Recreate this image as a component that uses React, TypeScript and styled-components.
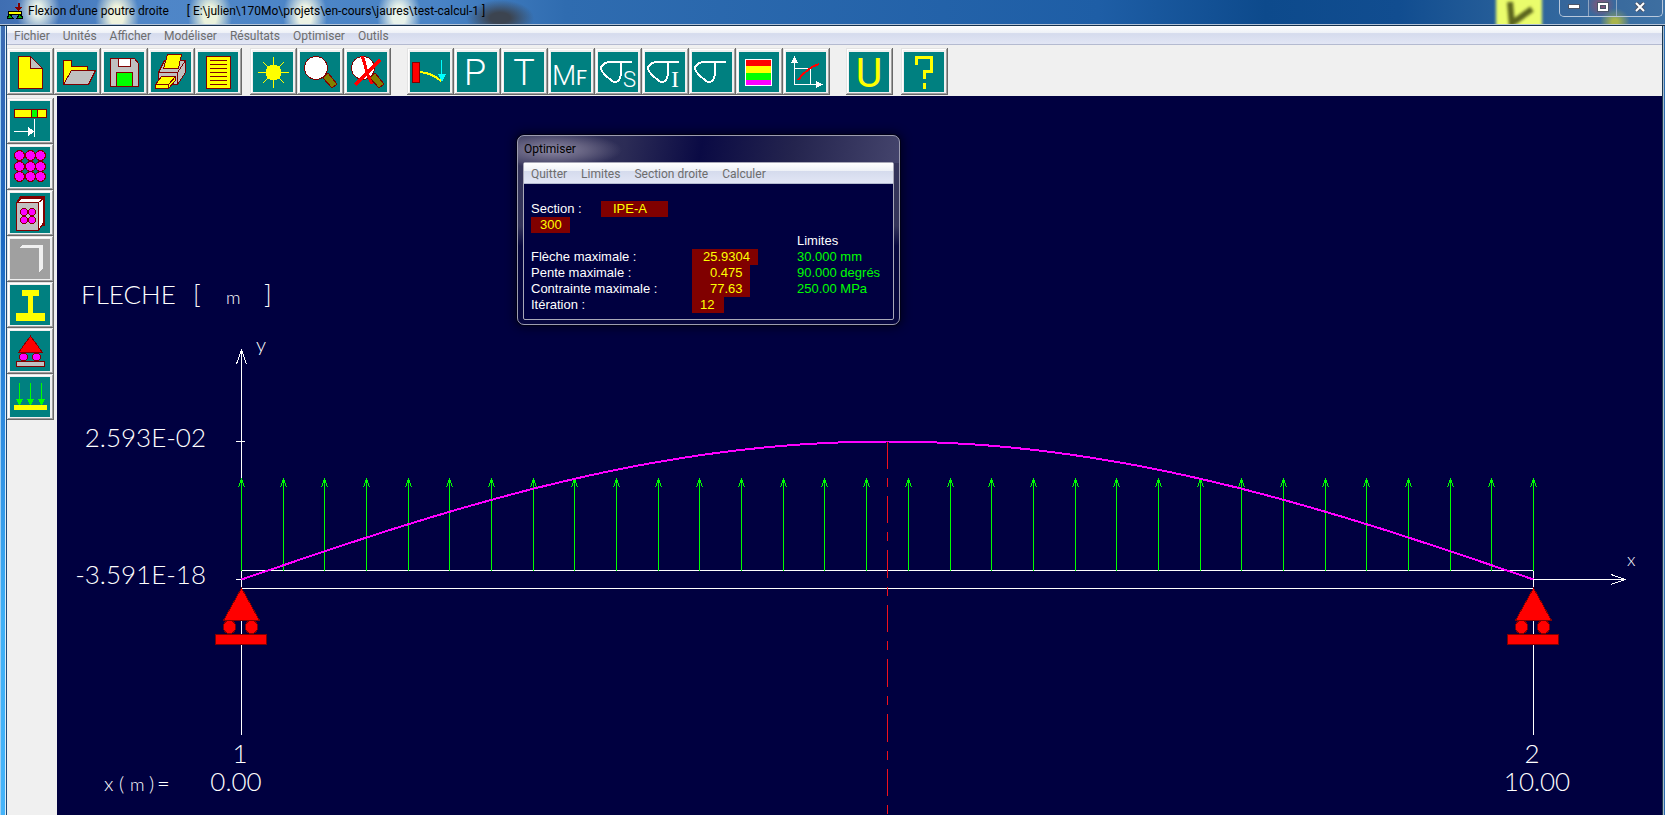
import React from "react";
import styled, { createGlobalStyle } from "styled-components";

const NAVY = "#000040";
const MAROON = "#800000";
const UI_FONT = 'Roboto, "Open Sans", sans-serif';

const GlobalStyle = createGlobalStyle`
  * { box-sizing: border-box; }
  body { margin: 0; background: ${NAVY}; font-family: ${UI_FONT}; font-size: 12px; }
  button { font: inherit; color: inherit; }
`;

/* ---------- window frame ---------- */

const Window = styled.div`
  display: flex;
  flex-direction: column;
  min-height: 100vh;
  padding: 0 3px 0 7px;
  background:
    linear-gradient(90deg, #9fd0f4 0 1px, transparent 1px 5px, #d8ecfa 5px 6px, #1c4a78 6px 7px, transparent 7px),
    linear-gradient(270deg, #2a6cae 0 1px, #a9bccf 1px 2px, #1c3a50 2px 3px, transparent 3px),
    linear-gradient(180deg, #3f6fb0 0, #3668b4 60px, #1a67c0 240px, #2a86dc 400px, #3fb0f6 620px, #45b4fa 100%);
`;

const TitleBar = styled.header`
  display: flex;
  align-items: flex-start;
  justify-content: space-between;
  height: 26px;
  margin: 0 -3px 0 -7px;
  padding: 0 2px 0 7px;
  border-bottom: 1px solid #14304c;
  box-shadow: inset 0 -1px 0 #b4c4d8;
  background:
    radial-gradient(ellipse 22px 30px at 38px 10px, #e6f0e8 20%, transparent 100%),
    radial-gradient(ellipse 22px 34px at 117px 16px, #eef2dc 30%, transparent 100%),
    radial-gradient(ellipse 22px 34px at 210px 16px, #eaf2dc 30%, transparent 100%),
    radial-gradient(ellipse 22px 34px at 305px 16px, #ecf2e4 30%, transparent 100%),
    radial-gradient(ellipse 22px 34px at 399px 16px, #e8f2ea 30%, transparent 100%),
    radial-gradient(ellipse 34px 18px at 500px 18px, #3c4450 30%, transparent 100%),
    radial-gradient(ellipse 14px 12px at calc(100% - 64px) 5px, #b04c68 10%, transparent 100%),
    radial-gradient(ellipse 15px 14px at calc(100% - 50px) 22px, #a8b44c 20%, transparent 100%),
    linear-gradient(90deg, #3f6eb2 0, #4f86c8 8%, #4a84c6 26%, #2f6cb0 34%, #1e5ea6 66%, #0d4a8c 76%, #114d90 84%, #33689e 94%, #3f74a8 100%);
`;

const TitleGroup = styled.div`
  display: flex;
  align-items: center;
  gap: 5px;
  height: 22px;
`;

const TitleText = styled.h1`
  margin: 0;
  font-size: 12px;
  font-weight: 400;
  line-height: 20px;
  color: #000;
  white-space: pre;
`;

const TitleRight = styled.div`
  display: flex;
  align-items: flex-start;
  gap: 12px;
`;

const CaptionButtons = styled.div`
  display: flex;
  height: 17px;
  border: 1px solid #b8c8dc;
  border-top: 0;
  border-radius: 0 0 5px 5px;
  overflow: hidden;
`;

const CaptionButton = styled.button<{ $wide?: boolean }>`
  display: grid;
  place-items: center;
  width: ${(p) => (p.$wide ? 46 : 28)}px;
  height: 16px;
  padding: 0 0 3px;
  border: 0;
  border-left: 1px solid #8ea6c2;
  background: rgba(60, 100, 150, 0.35);
  &:first-child { border-left: 0; }
`;

const MenuBar = styled.nav<{ $inset?: boolean }>`
  display: flex;
  gap: ${(p) => (p.$inset ? 14 : 13)}px;
  height: ${(p) => (p.$inset ? 21 : 19)}px;
  padding: 1px 7px 0;
  border-bottom: 1px solid #b4bad0;
  background: linear-gradient(180deg, #fff 0, #eef1f7 38%, #d5dbed 42%, #e2e6f5 100%);
`;

const MenuItem = styled.button`
  padding: 0;
  border: 0;
  background: none;
  font-size: 12px;
  line-height: 18px;
  color: #6d6d6d;
`;

/* ---------- tool buttons ---------- */

const Toolbar = styled.div`
  display: flex;
  gap: 16px;
  height: 51px;
  padding-top: 3px;
  background: #f0f0f0;
`;

const ToolGroup = styled.div`
  display: flex;
`;

const ToolCluster = styled.div`
  display: flex;
  gap: 8px;
`;

const ToolButton = styled.button<{ $short?: boolean; $disabled?: boolean }>`
  flex: none;
  width: 47px;
  height: ${(p) => (p.$short ? 46 : 47)}px;
  padding: 3px 4px 3px 3px;
  border: 0;
  background: #f0f0f0;
  box-shadow: inset -1px -1px 0 #696969, inset 1px 1px 0 #e3e3e3, inset -2px -2px 0 #a0a0a0, inset 2px 2px 0 #fff;
  svg {
    display: block;
    width: 40px;
    height: 40px;
    overflow: visible;
    background: ${(p) => (p.$disabled ? "#a0a0a0" : "#008080")};
  }
`;

const Main = styled.main`
  display: flex;
  flex: 1;
`;

const Sidebar = styled.aside`
  display: flex;
  flex-direction: column;
  flex: none;
  width: 50px;
  padding-top: 2px;
  background: #f0f0f0;
`;

const Plot = styled.section`
  position: relative;
  flex: 1;
  min-width: 0;
  background: ${NAVY};
`;

const Diagram = styled.svg`
  display: block;
  width: 100%;
  height: auto;
  font-family: Lato, "Liberation Sans", sans-serif;
  font-weight: 300;
  font-size: 26px;
  fill: #fff;
`;

/* ---------- dialog ---------- */

const Dialog = styled.section`
  position: absolute;
  left: 460px;
  top: 39px;
  width: 383px;
  padding: 0 5px 4px;
  border: 1px solid #9c9cb0;
  border-radius: 7px;
  box-shadow: 0 0 0 1px #000018, 0 0 8px 3px rgba(0, 0, 20, 0.7);
  background:
    radial-gradient(ellipse 70px 18px at 34px 14px, #8c88a4 0, #63607f 50%, transparent 100%),
    linear-gradient(100deg, #3a3a5e 0, #2c2c56 28%, #0a0a44 48%, #24244e 72%, #44446c 100%) top / 100% 27px no-repeat,
    linear-gradient(180deg, #34345a 0, #34345a 90px, #06063e 110px);
`;

const DialogTitle = styled.h2`
  margin: 0;
  padding: 2px 0 0 1px;
  height: 26px;
  font-size: 12px;
  font-weight: 400;
  line-height: 22px;
  color: #000;
`;

const DialogFrame = styled.div`
  border: 1px solid #a8a8b8;
  border-radius: 2px;
  background: ${NAVY};
`;

const DialogBody = styled.div`
  padding: 17px 8px 6px 7px;
  font-family: "Liberation Sans", Arial, sans-serif;
  font-size: 13px;
  line-height: 16px;
  color: #fff;
`;

const SectionRow = styled.div`
  display: flex;
`;

const SectionLabel = styled.span`
  width: 70px;
`;

const Value = styled.output<{ $width: number; $start: number }>`
  display: block;
  width: ${(p) => p.$width}px;
  padding-left: ${(p) => p.$start}px;
  background: ${MAROON};
  color: #ff0;
`;

const Results = styled.table`
  width: 100%;
  table-layout: fixed;
  border-collapse: collapse;
  th, td { padding: 0; font-weight: 400; text-align: left; white-space: nowrap; }
`;

const LabelCol = styled.col`width: 161px;`;
const ValueCol = styled.col`width: 105px;`;

const Limit = styled.td`
  color: #0f0;
`;

/* ---------- icons (40 × 40) ---------- */

const Icon = ({ children, smooth }: { children: React.ReactNode; smooth?: boolean }) => (
  <svg viewBox="0 0 40 40" shapeRendering={smooth ? "auto" : "crispEdges"} aria-hidden="true">
    {children}
  </svg>
);

const IconText = styled.text<{ $size: number; $weight?: number; $serif?: boolean }>`
  font-family: ${(p) => (p.$serif ? '"Liberation Serif", serif' : "Roboto, sans-serif")};
  font-size: ${(p) => p.$size}px;
  font-weight: ${(p) => p.$weight ?? 300};
`;

const outline = { stroke: MAROON, strokeWidth: 1 };

const Sigma = () => (
  <path d="M34 10H12Q3 11 3 17Q4 21 14 29Q17 31 20 29Q23 26 23 20V11" fill="none" stroke="#fff" strokeWidth="2" />
);

const Lens = () => (
  <g {...outline}>
    <path d="M23 26L28 21L37 32L32 36Z" fill="#808000" />
    <circle cx="16" cy="16" r="11.5" fill="#fff" />
  </g>
);

const icons: Record<string, React.ReactNode> = {
  nouveau: (
    <Icon>
      <path d="M8.500 4.500H20.500L32.500 16.500V36.500H8.500Z" fill="#ff0" {...outline} />
      <path d="M20.500 4.500L32.500 16.500H20.500Z" fill="#c0c0c0" {...outline} />
    </Icon>
  ),
  ouvrir: (
    <Icon>
      <path d="M6.500 32.500V8.500H14.500V14.500H30.500V18.500Z" fill="#ff0" {...outline} />
      <path d="M14.500 18.500H38.500L31.500 32.500H6.500Z" fill="#c0c0c0" {...outline} />
    </Icon>
  ),
  enregistrer: (
    <Icon>
      <path d="M6.500 6.500H30.500L34.500 11.500V34.500H6.500Z" fill="#c0c0c0" {...outline} />
      <path d="M14.500 6.500H26.500V14.500H14.500Z" fill="#fff" {...outline} />
      <path d="M12.500 20.500H28.500V34.500H12.500Z" fill="#0f0" {...outline} />
    </Icon>
  ),
  imprimer: (
    <Icon>
      <g {...outline}>
        <path d="M13.500 8.500H34.500L26.500 20.500H7.500Z" fill="#c0c0c0" />
        <path d="M16.500 2.500H30.500L27.500 16.500H12.500Z" fill="#ff0" />
        <path d="M7.500 20.500H26.500V32.500H7.500Z" fill="#c0c0c0" />
        <path d="M26.500 20.500L34.500 8.500V20.500L26.500 32.500Z" fill="#c0c0c0" />
        <path d="M10.500 24.500H24.500V28.500L17.500 36.500H4.500V32.500Z" fill="#ff0" />
        <path d="M4.500 32.500H17.500L24.500 24.500M17.500 32.500V36.500" fill="none" />
      </g>
    </Icon>
  ),
  note: (
    <Icon>
      <rect x="8.500" y="4.500" width="24" height="32" fill="#ff0" {...outline} />
      <path d="M12 8.500H29M12 12.500H29M12 16.500H29M12 20.500H29M12 24.500H29M12 28.500H29M12 32.500H29" {...outline} />
    </Icon>
  ),
  soleil: (
    <Icon>
      <path d="M5 20.500H36M20.500 5V36M10 10L31 31M31 10L10 31" stroke="#ff0" />
      <circle cx="20.500" cy="20.500" r="8" fill="#ff0" />
    </Icon>
  ),
  loupe: <Icon><Lens /></Icon>,
  sansLoupe: (
    <Icon>
      <Lens />
      <path d="M33 8L8 33M15 4C19 12 18 20 25 32" fill="none" stroke="#f00" strokeWidth="3" />
    </Icon>
  ),
  fleche: (
    <Icon>
      <rect x="2.500" y="10.500" width="7" height="20" fill="#f00" {...outline} />
      <path d="M10 20Q22 21 31 29" fill="none" stroke="#ff0" strokeWidth="2" />
      <path d="M31.500 8V23" stroke="#0ff" />
      <path d="M28 22H36L32 30Z" fill="#0ff" />
    </Icon>
  ),
  pente: <Icon smooth><IconText $size={36} x="7" y="33" fill="#fff">P</IconText></Icon>,
  tranchant: <Icon smooth><IconText $size={36} x="20" y="33" textAnchor="middle" fill="#fff">T</IconText></Icon>,
  moment: (
    <Icon smooth>
      <IconText $size={28} x="1" y="33" fill="#fff">M</IconText>
      <IconText $size={20} $weight={400} x="25" y="33" fill="#fff">F</IconText>
    </Icon>
  ),
  sigmaS: <Icon><Sigma /><IconText $size={22} x="25" y="35" fill="#fff">S</IconText></Icon>,
  sigmaI: <Icon><Sigma /><IconText $size={24} $serif x="26" y="35" fill="#fff">I</IconText></Icon>,
  sigma: <Icon><Sigma /></Icon>,
  spectre: (
    <Icon>
      <rect x="6" y="7" width="27" height="27" fill="#fff" />
      <rect x="7" y="8" width="25" height="7" fill="#f00" />
      <rect x="7" y="14" width="25" height="7" fill="#ff0" />
      <rect x="7" y="21" width="25" height="7" fill="#0f0" />
      <rect x="7" y="28" width="25" height="5" fill="#f0f" />
    </Icon>
  ),
  graphe: (
    <Icon>
      <path d="M8.500 8V32.500H32M8.500 16.500H24.500V32.500" fill="none" stroke="#fff" />
      <path d="M8.500 4L12 11H5ZM37 32.500L30 36V29Z" fill="#fff" />
      <path d="M12 28Q21 16 33 12" fill="none" stroke="#f00" strokeWidth="2" />
    </Icon>
  ),
  unites: <Icon smooth><IconText $size={41} $weight={400} x="20" y="35" textAnchor="middle" fill="#ff0">U</IconText></Icon>,
  aide: (
    <Icon>
      <path d="M12.500 13V5.500H27.500V19.500H20.500V27M20.500 31V37" fill="none" stroke="#ff0" strokeWidth="3" />
    </Icon>
  ),
  poutre: (
    <Icon>
      <rect x="4.500" y="8.500" width="32" height="8" fill="#ff0" {...outline} />
      <rect x="21.500" y="8.500" width="6" height="8" fill="#0f0" {...outline} />
      <path d="M4 30.500H20M24.500 18V36" stroke="#fff" />
      <path d="M18 26L25 30.500L18 35Z" fill="#fff" />
    </Icon>
  ),
  materiau: (
    <Icon>
      {[9, 20, 30].map((cy) => [9, 20, 30].map((cx) => (
        <circle key={`${cx}-${cy}`} cx={cx + 0.5} cy={cy - 0.5} r="5" fill="#f0f" {...outline} />
      )))}
    </Icon>
  ),
  bibliotheque: (
    <Icon>
      <g {...outline}>
        <path d="M10.500 3.500H34.500V32.500H28.500V9.500H6.500Z" fill={MAROON} />
        <path d="M6.500 9.500L11.500 5.500H33.500L28.500 9.500Z" fill="#fff" />
        <path d="M28.500 9.500L33.500 5.500V29.500L28.500 37.500Z" fill="#fff" />
        <rect x="6.500" y="9.500" width="22" height="28" fill="#c0c0c0" />
        {[19, 27].map((cy) => [14, 22].map((cx) => (
          <circle key={`${cx}-${cy}`} cx={cx} cy={cy} r="3.500" fill="#f0f" />
        )))}
      </g>
    </Icon>
  ),
  console: <Icon><path d="M9 9L12 6H33V29L29 33V9Z" fill="#f0f0f0" /></Icon>,
  profil: <Icon><path d="M12 5H29V11H23V28H35V36H6V28H18V11H12Z" fill="#ff0" /></Icon>,
  appui: (
    <Icon>
      <path d="M20.500 5L32.500 21.500H8.500Z" fill="#f00" {...outline} />
      <circle cx="13.500" cy="26" r="4" fill="#f0f" {...outline} />
      <circle cx="26.500" cy="26" r="4" fill="#f0f" {...outline} />
      <rect x="6.500" y="30.500" width="28" height="5" fill="#c0c0c0" {...outline} />
    </Icon>
  ),
  charge: (
    <Icon>
      {[9, 20, 31].map((x) => (
        <g key={x} fill="#0f0">
          <rect x={x} y="6" width="1" height="18" />
          <path d={`M${x - 3} 22H${x + 4}L${x + 0.5} 29Z`} />
        </g>
      ))}
      <rect x="4" y="28" width="33" height="5" fill="#ff0" />
    </Icon>
  ),
};

type Tool = [icon: string, label: string];

const fileTools: Tool[] = [
  ["nouveau", "Nouveau"], ["ouvrir", "Ouvrir"], ["enregistrer", "Enregistrer"], ["imprimer", "Imprimer"], ["note", "Note de calcul"],
];
const viewTools: Tool[] = [["soleil", "Afficher"], ["loupe", "Zoom"], ["sansLoupe", "Annuler le zoom"]];
const resultTools: Tool[] = [
  ["fleche", "Flèche"], ["pente", "Pente"], ["tranchant", "Effort tranchant"], ["moment", "Moment fléchissant"],
  ["sigmaS", "Contrainte supérieure"], ["sigmaI", "Contrainte inférieure"], ["sigma", "Contrainte"],
  ["spectre", "Isovaleurs"], ["graphe", "Graphe"],
];
const helpTools: Tool[] = [["unites", "Unités"], ["aide", "Aide"]];
const modelTools: Tool[] = [
  ["poutre", "Nœuds"], ["materiau", "Matériau"], ["bibliotheque", "Bibliothèque"], ["console", "Orientation"],
  ["profil", "Section droite"], ["appui", "Appuis"], ["charge", "Charges"],
];

const Tools = ({ items, short }: { items: Tool[]; short?: boolean }) => (
  <>
    {items.map(([icon, label]) => (
      <ToolButton key={icon} type="button" aria-label={label} $short={short} $disabled={icon === "console"} disabled={icon === "console"}>
        {icons[icon]}
      </ToolButton>
    ))}
  </>
);

const AppIcon = () => (
  <svg width="16" height="16" viewBox="0 0 16 16" shapeRendering="crispEdges" aria-hidden="true">
    <path d="M0 15L3 11L6 15ZM10 15L13 11L16 15Z" fill="#0a0" stroke="#000" />
    <rect x="1.500" y="8.500" width="13" height="3" fill="#ff0" stroke="#000" />
    <path d="M11.500 0V5" stroke={MAROON} strokeWidth="2" />
    <path d="M7 4H16L11.500 8Z" fill={MAROON} />
  </svg>
);

const DeskNote = () => (
  <svg width="54" height="24" viewBox="0 0 54 24" aria-hidden="true">
    <defs>
      <filter id="soft" filterUnits="userSpaceOnUse" x="-10" y="-20" width="80" height="70">
        <feGaussianBlur stdDeviation="1.600" />
      </filter>
    </defs>
    <rect x="3" y="-6" width="46" height="36" fill="#eafc6c" filter="url(#soft)" />
    <path d="M17 2L19 26M21 22L39 9" stroke="#5a641c" strokeWidth="6" fill="none" filter="url(#soft)" />
  </svg>
);

/* ---------- beam diagram ---------- */

const LEFT = 184.5;
const RIGHT = 1476.5;
const AXIS = 483.5;
const BEAM_TOP = 474.5;
const BEAM_BOTTOM = 492.5;
const MAX_RISE = 138;
const LOADS = 32;

const deflection = Array.from({ length: 101 }, (_, i) => {
  const t = i / 100;
  const rise = (16 / 5) * (t - 2 * t ** 3 + t ** 4) * MAX_RISE;
  return `${(LEFT + t * (RIGHT - LEFT)).toFixed(1)},${(AXIS - rise).toFixed(1)}`;
}).join(" ");

const Support = ({ x }: { x: number }) => (
  <g fill="#f00" stroke={MAROON} shapeRendering="crispEdges">
    <path d={`M${x} ${BEAM_BOTTOM}V639`} stroke="#fff" />
    <path d={`M${x} 492L${x + 18} 524.500H${x - 18}Z`} />
    <circle cx={x - 12} cy="531" r="6.500" />
    <circle cx={x + 10} cy="531" r="6.500" />
    <rect x={x - 26} y="538" width="51" height="10" />
  </g>
);

const BeamDiagram = () => (
  <Diagram viewBox="0 0 1605 719" role="img" aria-label="Flèche de la poutre">
    <g stroke="#fff" fill="none" shapeRendering="crispEdges">
      <path d={`M${LEFT} 254V${BEAM_BOTTOM}M179.500 268L${LEFT} 254L189.500 268M179 345.500H188M179 ${AXIS}H188`} />
      <path d={`M${LEFT} ${BEAM_TOP}H${RIGHT}V${BEAM_BOTTOM}H${LEFT}`} />
      <path d={`M${RIGHT} ${AXIS}H1568M1554 478.500L1568 ${AXIS}L1554 488.500`} />
    </g>
    <path d="M830.500 345V719" stroke="#f0101c" strokeDasharray="27.600 9 9 9" shapeRendering="crispEdges" />
    <g stroke="#0f0" fill="none" shapeRendering="crispEdges">
      {Array.from({ length: LOADS }, (_, i) => {
        const x = Math.floor(LEFT + (i * (RIGHT - LEFT)) / (LOADS - 1)) + 0.5;
        return <path key={i} d={`M${x} 382V475M${x - 3} 391L${x} 383L${x + 3} 391`} />;
      })}
    </g>
    <polyline points={deflection} fill="none" stroke="#f0f" strokeWidth="2" shapeRendering="crispEdges" />
    <Support x={LEFT} />
    <Support x={RIGHT} />
    <text x="24" y="208">FLECHE</text>
    <text x="136" y="208">[</text>
    <text x="169" y="208" fontSize="18">m</text>
    <text x="207" y="208">]</text>
    <text x="199" y="256" fontSize="20">y</text>
    <text x="149" y="351" textAnchor="end">2.593E-02</text>
    <text x="149" y="488" textAnchor="end">-3.591E-18</text>
    <text x="183" y="667" textAnchor="middle">1</text>
    <text x="179" y="695" textAnchor="middle">0.00</text>
    <text x="47" y="695" fontSize="20">x</text>
    <text x="62" y="695" fontSize="20">(</text>
    <text x="73" y="695" fontSize="18">m</text>
    <text x="92" y="695" fontSize="20">)</text>
    <text x="100" y="695" fontSize="22">=</text>
    <text x="1475" y="667" textAnchor="middle">2</text>
    <text x="1480" y="695" textAnchor="middle">10.00</text>
    <text x="1570" y="470" fontSize="18">x</text>
  </Diagram>
);

/* ---------- page ---------- */

const mainMenu = ["Fichier", "Unités", "Afficher", "Modéliser", "Résultats", "Optimiser", "Outils"];
const dialogMenu = ["Quitter", "Limites", "Section droite", "Calculer"];

const results = [
  { label: "Flèche maximale :", value: "25.9304", width: 66, start: 11, limit: "30.000 mm" },
  { label: "Pente maximale :", value: "0.475", width: 58, start: 18, limit: "90.000 degrés" },
  { label: "Contrainte maximale :", value: "77.63", width: 58, start: 18, limit: "250.00 MPa" },
  { label: "Itération :", value: "12", width: 32, start: 8, limit: "" },
];

const OptimiseDialog = () => (
  <Dialog role="dialog" aria-labelledby="optimiser">
    <DialogTitle id="optimiser">Optimiser</DialogTitle>
    <DialogFrame>
      <MenuBar $inset>
        {dialogMenu.map((item) => <MenuItem key={item} type="button">{item}</MenuItem>)}
      </MenuBar>
      <DialogBody>
        <SectionRow>
          <SectionLabel>Section :</SectionLabel>
          <Value $width={67} $start={12}>IPE-A</Value>
        </SectionRow>
        <Value $width={39} $start={9}>300</Value>
        <Results>
          <colgroup><LabelCol /><ValueCol /><col /></colgroup>
          <thead>
            <tr><td /><td /><th scope="col">Limites</th></tr>
          </thead>
          <tbody>
            {results.map((r) => (
              <tr key={r.label}>
                <th scope="row">{r.label}</th>
                <td><Value $width={r.width} $start={r.start}>{r.value}</Value></td>
                <Limit>{r.limit}</Limit>
              </tr>
            ))}
          </tbody>
        </Results>
      </DialogBody>
    </DialogFrame>
  </Dialog>
);

export default function App() {
  return (
    <>
      <GlobalStyle />
      <Window>
        <TitleBar>
          <TitleGroup>
            <AppIcon />
            <TitleText>{"Flexion d'une poutre droite      [ E:\\julien\\170Mo\\projets\\en-cours\\jaures\\test-calcul-1 ]"}</TitleText>
          </TitleGroup>
          <TitleRight>
            <DeskNote />
            <CaptionButtons>
              <CaptionButton type="button" aria-label="Réduire">
                <svg width="12" height="5"><rect x="0.500" y="0.500" width="11" height="4" fill="#fff" stroke="#4a5468" /></svg>
              </CaptionButton>
              <CaptionButton type="button" aria-label="Agrandir">
                <svg width="12" height="10"><rect x="2" y="2" width="8" height="6" fill="none" stroke="#4a5468" strokeWidth="4" /><rect x="2" y="2" width="8" height="6" fill="none" stroke="#fff" strokeWidth="2" /></svg>
              </CaptionButton>
              <CaptionButton type="button" aria-label="Fermer" $wide>
                <svg width="12" height="10"><path d="M2 1L10 9M10 1L2 9" stroke="#4a5468" strokeWidth="4" /><path d="M2 1L10 9M10 1L2 9" stroke="#fff" strokeWidth="2" /></svg>
              </CaptionButton>
            </CaptionButtons>
          </TitleRight>
        </TitleBar>
        <MenuBar>
          {mainMenu.map((item) => <MenuItem key={item} type="button">{item}</MenuItem>)}
        </MenuBar>
        <Toolbar>
          <ToolCluster>
            <ToolGroup><Tools items={fileTools} /></ToolGroup>
            <ToolGroup><Tools items={viewTools} /></ToolGroup>
          </ToolCluster>
          <ToolGroup><Tools items={resultTools} /></ToolGroup>
          <ToolCluster><Tools items={helpTools} /></ToolCluster>
        </Toolbar>
        <Main>
          <Sidebar><Tools items={modelTools} short /></Sidebar>
          <Plot>
            <BeamDiagram />
            <OptimiseDialog />
          </Plot>
        </Main>
      </Window>
    </>
  );
}
